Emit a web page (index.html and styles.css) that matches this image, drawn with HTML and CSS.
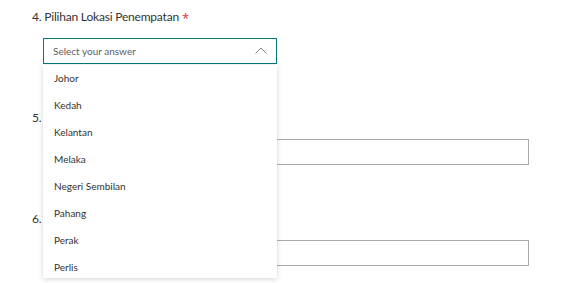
FILE: index.html
```html
<!DOCTYPE html>
<html lang="en">

<head>
    <meta charset="UTF-8">
    <meta name="viewport" content="width=device-width, initial-scale=1.0">
    <title>Borang</title>
    <link rel="stylesheet" href="styles.css">
</head>

<body>

    <div class="question">
        <div class="q-title">4. Pilihan Lokasi Penempatan<span class="required">*</span></div>
        <div class="select-wrap">
            <div class="select-box">
                <span class="placeholder">Select your answer</span>
                <svg class="chevron" width="12" height="7" viewBox="0 0 12 7">
                    <path d="M0.5 6.5 L6 1 L11.5 6.5" fill="none" stroke="#8a8886" stroke-width="1"/>
                </svg>
            </div>
            <ul class="dropdown">
                <li>Johor</li>
                <li>Kedah</li>
                <li>Kelantan</li>
                <li>Melaka</li>
                <li>Negeri Sembilan</li>
                <li>Pahang</li>
                <li>Perak</li>
                <li>Perlis</li>
            </ul>
        </div>
    </div>

    <div class="question">
        <div class="q-title">5.</div>
        <div class="text-input"></div>
    </div>

    <div class="question">
        <div class="q-title">6.</div>
        <div class="text-input"></div>
    </div>

</body>

</html>
```

FILE: styles.css
```css
body {
    margin: 0;
    padding-top: 7px;
    background: #fff;
    font-family: Lato, "Open Sans", sans-serif;
    color: #333;
}

.question {
    padding-left: 32px;
    margin-bottom: 44px;
}

.q-title {
    height: 20px;
    line-height: 20px;
    font-size: 12px;
    letter-spacing: -0.2px;
    color: #333;
}

.required {
    font-family: "Open Sans", sans-serif;
    font-size: 13px;
    color: #d13438;
    margin-left: 3px;
    vertical-align: -2px;
}

.select-wrap {
    position: relative;
    width: 234px;
    margin: 11px 0 0 11px;
}

.select-box {
    display: flex;
    align-items: center;
    justify-content: space-between;
    box-sizing: border-box;
    height: 26px;
    padding: 0 8px 0 9px;
    border: 1px solid #03787c;
    font-size: 10px;
    color: #605e5c;
}

.chevron {
    margin-right: 1px;
    margin-bottom: 1px;
}

.dropdown {
    position: absolute;
    top: 27px;
    left: 0;
    right: 0;
    z-index: 5;
    height: 213px;
    overflow: hidden;
    margin: 0;
    padding: 0;
    list-style: none;
    background: #fff;
    box-shadow: 0 1px 5px rgba(0, 0, 0, 0.18);
}

.dropdown li {
    height: 27px;
    line-height: 27px;
    padding-left: 11px;
    font-size: 10px;
    color: #323130;
}

.text-input {
    box-sizing: border-box;
    width: 486px;
    height: 26px;
    margin: 11px 0 0 11px;
    border: 1px solid #ababab;
}
```
